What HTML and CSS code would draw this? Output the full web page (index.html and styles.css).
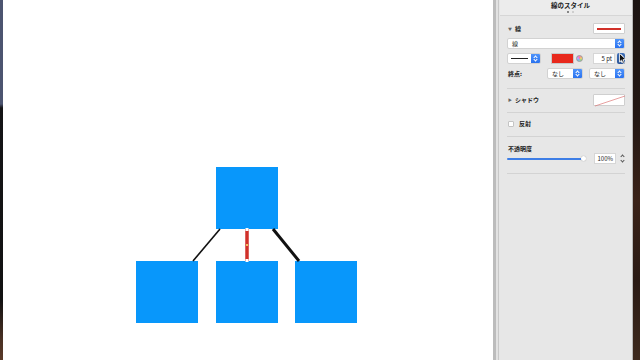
FILE: index.html
```html
<!DOCTYPE html>
<html lang="ja">
<head>
    <meta charset="UTF-8">
    <meta name="viewport" content="width=device-width, initial-scale=1.0">
    <title>線のスタイル</title>
    <link rel="stylesheet" href="styles.css">
</head>
<body>
    <div class="desk-left"></div>

    <main class="canvas">
        <div class="node node-top"></div>
        <div class="node node-a"></div>
        <div class="node node-b"></div>
        <div class="node node-c"></div>
        <svg class="links" width="490" height="360" viewBox="0 0 490 360">
            <line x1="217" y1="229" x2="190" y2="261" stroke="#111" stroke-width="1.6"/>
            <line x1="270" y1="229" x2="296" y2="261" stroke="#111" stroke-width="3"/>
            <line x1="244" y1="229" x2="244" y2="261" stroke="#d1312a" stroke-width="3.5"/>
            <rect x="242.5" y="228" width="3" height="3" fill="#fff"/>
            <rect x="242.5" y="259" width="3" height="3" fill="#fff"/>
            <rect x="243" y="244" width="2" height="2" fill="#f0c060"/>
        </svg>
    </main>

    <div class="gutter"></div>

    <aside class="panel">
        <div class="panel-head">
            <div class="panel-title">線のスタイル</div>
            <div class="dots"><span class="dot on"></span><span class="dot"></span></div>
        </div>

        <section class="group group-line">
            <div class="row">
                <span class="label"><span class="tri">▼</span> 線</span>
                <span class="preview"><span class="preview-stroke"></span></span>
            </div>
            <div class="row">
                <div class="select wide">
                    <span class="select-text">線</span>
                    <span class="stepper"></span>
                </div>
            </div>
            <div class="row">
                <div class="select style-pick">
                    <span class="dash"></span>
                    <span class="stepper"></span>
                </div>
                <div class="well-wrap">
                    <span class="well"></span>
                    <span class="wheel"></span>
                </div>
                <div class="field-wrap">
                    <span class="field">5 pt</span>
                    <span class="stepper dark"></span>
                    <svg class="cursor" width="8" height="11" viewBox="0 0 8 11">
                        <path d="M0.5 0.5 L0.5 9 L2.6 7 L4 10.3 L5.4 9.7 L4.1 6.6 L7 6.6 Z" fill="#111" stroke="#fff" stroke-width="0.8"/>
                    </svg>
                </div>
            </div>
            <div class="row">
                <span class="label">終点:</span>
                <div class="ends">
                    <div class="select end">
                        <span class="select-text">なし</span>
                        <span class="stepper"></span>
                    </div>
                    <div class="select end">
                        <span class="select-text">なし</span>
                        <span class="stepper"></span>
                    </div>
                </div>
            </div>
        </section>

        <section class="group group-shadow">
            <div class="row">
                <span class="label"><span class="tri">▶</span> シャドウ</span>
                <span class="preview shadow-preview">
                    <svg width="32" height="12" viewBox="0 0 32 12"><line x1="1" y1="11" x2="31" y2="1" stroke="#d77" stroke-width="0.7"/></svg>
                </span>
            </div>
        </section>

        <section class="group group-reflect">
            <div class="row">
                <span class="label"><span class="check"></span> 反射</span>
            </div>
        </section>

        <section class="group group-opacity">
            <div class="label">不透明度</div>
            <div class="row">
                <div class="slider">
                    <span class="track"></span>
                    <span class="knob"></span>
                </div>
                <div class="field-wrap">
                    <span class="field">100%</span>
                    <span class="stepper plain"></span>
                </div>
            </div>
        </section>
    </aside>

    <div class="desk-right"></div>
</body>
</html>
```

FILE: styles.css
```css
body {
    margin: 0;
    padding: 0;
    width: 640px;
    height: 360px;
    display: flex;
    overflow: hidden;
    font-family: "Noto Sans CJK JP", "Noto Sans", sans-serif;
    color: #222;
}

.desk-left {
    width: 3px;
    background: linear-gradient(to bottom, #4c5470 0, #4c5470 104px, #141416 108px, #121212 300px, #4a3124 340px, #5a3a28 360px);
}

.desk-right {
    width: 7px;
    background: linear-gradient(to bottom, #1c1412 0, #241814 120px, #3a2218 200px, #2a1a14 280px, #3e2a1e 360px);
}

.canvas {
    flex: 1;
    position: relative;
    background: #fff;
}

.node {
    position: absolute;
    width: 62px;
    height: 62px;
    background: #0897fb;
}

.node-top { left: 213px; top: 167px; }
.node-a { left: 133px; top: 261px; }
.node-b { left: 213px; top: 261px; }
.node-c { left: 292px; top: 261px; }

.links {
    position: absolute;
    left: 0;
    top: 0;
}

.gutter {
    width: 7px;
    background: linear-gradient(to right, #bcbcbc 0, #bcbcbc 3px, #e2e2e2 3px, #e2e2e2 5px, #c8c8c8 5px, #c8c8c8 6px, #e6e6e6 6px);
}

.panel {
    width: 133px;
    background: #e7e7e7;
    border-right: 1px solid #b8b8b8;
    box-sizing: border-box;
    font-size: 6px;
}

.panel-head {
    height: 16px;
    box-sizing: border-box;
    background: #ececec;
    border-bottom: 1px solid #d6d6d6;
    text-align: center;
}

.panel-title {
    font-size: 6.5px;
    font-weight: bold;
    line-height: 8px;
    padding-top: 1px;
    padding-left: 9px;
}

.dots {
    display: flex;
    justify-content: center;
    gap: 3px;
    margin-top: 2px;
    padding-left: 9px;
}

.dot {
    width: 2px;
    height: 2px;
    border-radius: 50%;
    background: #c4c4c4;
}

.dot.on {
    background: #666;
}

.group {
    margin: 0 7px 0 7px;
    border-bottom: 1px solid #d3d3d3;
    display: flex;
    flex-direction: column;
    gap: 4px;
}

.group-line { padding: 7px 0 9px; }
.group-shadow { padding: 5px 0 6px; }
.group-reflect { padding: 7px 0 8px; }
.group-opacity { padding: 8px 0 9px; gap: 0; }

.row {
    display: flex;
    align-items: center;
    justify-content: space-between;
    height: 11px;
}

.group-shadow .row { height: 12px; }
.group-reflect .row { height: 8px; }

.label {
    display: flex;
    align-items: center;
    gap: 3px;
    padding-left: 1px;
    font-weight: bold;
    line-height: 8px;
}

.tri {
    font-size: 4px;
    color: #666;
}

.preview {
    width: 32px;
    height: 11px;
    box-sizing: border-box;
    background: #fff;
    border: 1px solid #cfcfcf;
    border-radius: 1px;
    display: flex;
    align-items: center;
    justify-content: center;
}

.preview-stroke {
    width: 24px;
    height: 2px;
    background: #d1312a;
}

.shadow-preview {
    height: 12px;
    display: block;
}

.shadow-preview svg {
    display: block;
}

.select {
    height: 11px;
    display: flex;
    background: #fff;
    border: 1px solid #d2d2d2;
    border-radius: 2px;
    box-sizing: border-box;
    overflow: hidden;
}

.select.wide {
    width: 100%;
}

.select-text {
    flex: 1;
    padding-left: 4px;
    line-height: 9px;
}

.stepper {
    width: 9px;
    height: 100%;
    background: linear-gradient(#4f94fb, #2a72ef);
    position: relative;
}

.stepper::before,
.stepper::after {
    content: "";
    position: absolute;
    left: 3px;
    width: 2px;
    height: 2px;
    border-left: 0.8px solid #fff;
    border-top: 0.8px solid #fff;
}

.stepper::before {
    top: 2px;
    transform: rotate(45deg);
}

.stepper::after {
    bottom: 2px;
    transform: rotate(225deg);
}

.stepper.dark {
    width: 8px;
    height: 11px;
    border-radius: 2px;
    background: linear-gradient(#3f6fb8, #2c5596);
}

.stepper.plain {
    width: 7px;
    height: 11px;
    background: none;
}

.stepper.plain::before,
.stepper.plain::after {
    border-color: #555;
    left: 2.5px;
}

.style-pick {
    width: 34px;
}

.dash {
    flex: 1;
    align-self: center;
    height: 1px;
    margin: 0 3px;
    background: #222;
}

.well-wrap {
    display: flex;
    align-items: center;
    gap: 2px;
    margin-left: 10px;
}

.well {
    width: 23px;
    height: 11px;
    box-sizing: border-box;
    background: #e8281c;
    border: 1px solid #c9c9c9;
    border-radius: 1px;
}

.wheel {
    width: 5px;
    height: 5px;
    border-radius: 50%;
    border: 1px solid #9a9a9a;
    background: conic-gradient(#f7a, #fc6, #9d8, #7bf, #c9f, #f7a);
}

.field-wrap {
    display: flex;
    align-items: center;
    gap: 2px;
    margin-left: auto;
    position: relative;
}

.field {
    width: 22px;
    height: 11px;
    box-sizing: border-box;
    background: #fff;
    border: 1px solid #d6d6d6;
    text-align: right;
    padding-right: 2px;
    line-height: 9px;
}

.cursor {
    position: absolute;
    left: 26px;
    top: 0;
}

.ends {
    display: flex;
    gap: 6px;
}

.select.end {
    width: 36px;
}

.check {
    width: 6px;
    height: 6px;
    box-sizing: border-box;
    background: #fff;
    border: 1px solid #c4c4c4;
    border-radius: 1px;
    margin-right: 2px;
}

.slider {
    width: 79px;
    height: 11px;
    position: relative;
}

.track {
    position: absolute;
    left: 0;
    right: 3px;
    top: 5px;
    height: 2px;
    border-radius: 1px;
    background: #3e7ee6;
}

.knob {
    position: absolute;
    right: 0;
    top: 3px;
    width: 5px;
    height: 5px;
    border-radius: 50%;
    background: #fff;
    box-shadow: 0 0 1px #888;
}
```
